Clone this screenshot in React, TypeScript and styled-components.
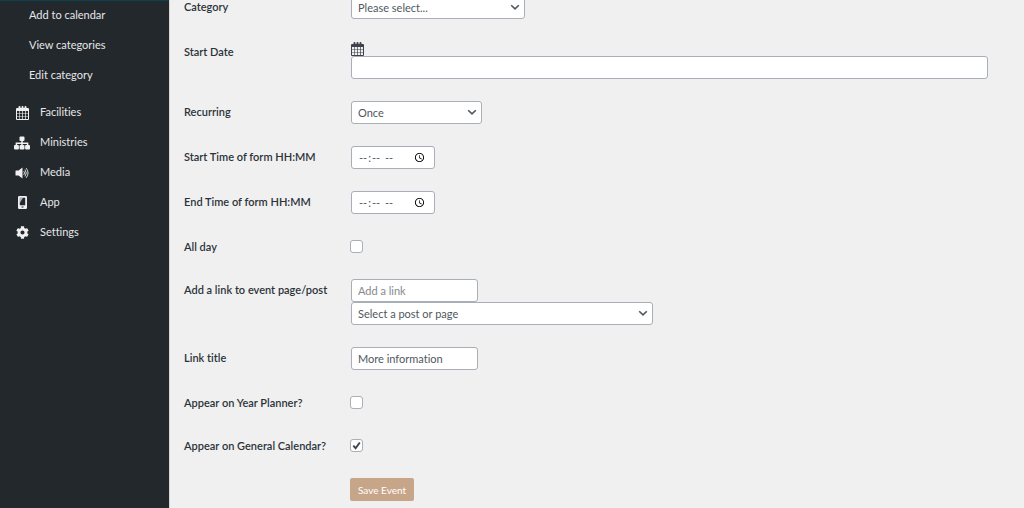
import React from "react";
import styled, { createGlobalStyle } from "styled-components";
import { FaCog } from "react-icons/fa";

const GlobalStyle = createGlobalStyle`
  *, *::before, *::after { box-sizing: border-box; }
  body { margin: 0; background: #f0f0f1; overflow: hidden; }
  body, button, input, select {
    font-family: Lato, "Open Sans", sans-serif;
    font-size: 11px;
    font-variant-ligatures: none;
  }
`;

const Page = styled.div`
  display: flex;
  min-height: 100vh;
  color: #3c434a;
`;

const Sidebar = styled.nav`
  flex: 0 0 169px;
  background: #23282d;
  border-top: 1px solid #0d3f4c;
`;

const Menu = styled.ul<{ $nested?: boolean }>`
  list-style: none;
  margin: ${(p) => (p.$nested ? "-2px 0 0" : "0")};
  padding: ${(p) => (p.$nested ? "0 0 7px 29px" : "0 0 0 14px")};
`;

const MenuLink = styled.a`
  display: flex;
  align-items: center;
  gap: 10px;
  height: 30px;
  color: #e6e7e8;
  text-decoration: none;
`;

const MenuIcon = styled.span`
  display: flex;
  justify-content: center;
  width: 16px;
  padding-top: 3px;
  color: #f0f0f1;
`;

const Main = styled.main`
  flex: 1;
  min-width: 0;
  padding: 0 36px 0 14px;
  border-left: 1px solid #d5d7da;
`;

const Form = styled.form`
  margin-top: -15px;
`;

const Row = styled.div<{ $check?: boolean }>`
  display: grid;
  grid-template-columns: 167px minmax(0, 1fr);
  padding: ${(p) => (p.$check ? "15px 0" : "11px 0")};
`;

const Label = styled.label<{ $check?: boolean }>`
  font-weight: 600;
  color: #2c3338;
  height: ${(p) => (p.$check ? 13 : 23)}px;
  line-height: ${(p) => (p.$check ? 13 : 22)}px;
`;

const Controls = styled.div`
  display: flex;
  flex-direction: column;
  align-items: flex-start;
`;

const IconButton = styled.button`
  display: flex;
  align-items: center;
  height: 15px;
  padding: 0;
  border: 0;
  background: none;
  color: #3c434a;
`;

const TextInput = styled.input<{ $width: string }>`
  width: ${(p) => p.$width};
  height: 23px;
  padding: 0 5px 0 6px;
  border: 1px solid #a9afb6;
  border-radius: 3px;
  background: #fff;
  color: #50575e;
  &::placeholder { color: #85898e; }
`;

const SelectWrap = styled.div<{ $width: number }>`
  display: grid;
  width: ${(p) => p.$width}px;
  max-width: 100%;
  align-items: center;
  & > * { grid-area: 1 / 1; }
  & > svg { justify-self: end; margin-right: 5px; pointer-events: none; }
`;

const SelectBox = styled.select`
  appearance: none;
  width: 100%;
  height: 23px;
  padding: 0 20px 0 6px;
  border: 1px solid #a9afb6;
  border-radius: 3px;
  background: #fff;
  color: #50575e;
`;

const CheckWrap = styled.span`
  display: grid;
  width: 13px;
  height: 13px;
  margin-left: -1px;
  & > * { grid-area: 1 / 1; }
  & > svg { display: none; pointer-events: none; }
  & > input:checked + svg { display: block; }
`;

const CheckInput = styled.input`
  appearance: none;
  width: 13px;
  height: 13px;
  margin: 0;
  border: 1px solid #a9afb6;
  border-radius: 3px;
  background: #fff;
`;

const SaveButton = styled.button`
  height: 23px;
  margin: 11px 0 8px 166px;
  padding: 0 8px;
  border: 0;
  border-radius: 2px;
  background: #c7a589;
  color: #fff;
  font-size: 10px;
`;

const CalendarIcon = () => (
  <svg width="13" height="14" viewBox="0 0 13 14" aria-hidden="true">
    <path
      fill="currentColor"
      fillRule="evenodd"
      d="M1 2h1.500V1a1 1 0 0 1 2 0v1h1V1a1 1 0 0 1 2 0v1h1V1a1 1 0 0 1 2 0v1H12a1 1 0 0 1 1 1v10a1 1 0 0 1-1 1H1a1 1 0 0 1-1-1V3a1 1 0 0 1 1-1zM1 5v2h2.200V5zM3.800 5v2h2.300V5zM6.800 5v2h2.300V5zM9.800 5v2H12V5zM1 7.600v2.300h2.200V7.600zM3.800 7.600v2.300h2.300V7.600zM6.800 7.600v2.300h2.300V7.600zM9.800 7.600v2.300H12V7.600zM1 10.600V13h2.200v-2.400zM3.800 10.600V13h2.300v-2.400zM6.800 10.600V13h2.300v-2.400zM9.800 10.600V13H12v-2.400z"
    />
  </svg>
);

const SitemapIcon = () => (
  <svg width="16" height="14" viewBox="0 0 16 14" aria-hidden="true">
    <rect x="5.500" y="0.500" width="5" height="4.500" rx="1" fill="currentColor" />
    <rect x="0" y="9" width="4.900" height="4.500" rx="1" fill="currentColor" />
    <rect x="5.500" y="9" width="5" height="4.500" rx="1" fill="currentColor" />
    <rect x="11.100" y="9" width="4.900" height="4.500" rx="1" fill="currentColor" />
    <path d="M8 4v6M2.400 10V7.200h11.200V10" fill="none" stroke="currentColor" strokeWidth="1.500" />
  </svg>
);

const SpeakerIcon = () => (
  <svg width="14" height="12" viewBox="0 0 14 12" aria-hidden="true">
    <path fill="currentColor" d="M1 3.500h2.500L7.500 0.500v11L3.500 8.500H1Q0.500 8.500 .5 8V4Q.5 3.500 1 3.500z" />
    <path fill="none" stroke="currentColor" strokeWidth="0.900" d="M8.800 4.200q1.400 1.800 0 3.600M10 2.600q2.500 3.400 0 6.800M11.200 1.200q3.700 4.800 0 9.600" />
  </svg>
);

const PhoneIcon = () => (
  <svg width="9" height="13" viewBox="0 0 9 13" aria-hidden="true">
    <path
      fill="currentColor"
      fillRule="evenodd"
      d="M1.200 0h6.600Q9 0 9 1.200v10.600Q9 13 7.800 13H1.200Q0 13 0 11.800V1.200Q0 0 1.200 0zM1.800 1.800v7.400h5.400V1.800zM3.500 10.600v1h2v-1z"
    />
    <path fill="currentColor" opacity="0.700" d="M1.800 1.800h3.200L1.800 7z" />
  </svg>
);

const Chevron = () => (
  <svg width="10" height="7" viewBox="0 0 10 7" aria-hidden="true">
    <path d="M1.200 1.200 5 4.900l3.800-3.700" fill="none" stroke="#50575e" strokeWidth="1.600" />
  </svg>
);

const Tick = () => (
  <svg width="13" height="13" viewBox="0 0 13 13" aria-hidden="true">
    <path d="M3.300 6.700 5.600 9.200 9.800 3.500" fill="none" stroke="#3c434a" strokeWidth="1.900" />
  </svg>
);

function Select({ id, width, option, name }: { id: string; width: number; option: string; name?: string }) {
  return (
    <SelectWrap $width={width}>
      <SelectBox id={id} aria-label={name}>
        <option>{option}</option>
      </SelectBox>
      <Chevron />
    </SelectWrap>
  );
}

function Field({ id, label, children }: { id: string; label: string; children: React.ReactNode }) {
  return (
    <Row>
      <Label htmlFor={id}>{label}</Label>
      <Controls>{children}</Controls>
    </Row>
  );
}

function CheckField({ id, label, checked }: { id: string; label: string; checked?: boolean }) {
  return (
    <Row $check>
      <Label $check htmlFor={id}>{label}</Label>
      <CheckWrap>
        <CheckInput id={id} type="checkbox" defaultChecked={checked} />
        <Tick />
      </CheckWrap>
    </Row>
  );
}

const subItems = ["Add to calendar", "View categories", "Edit category"];
const items = [
  { label: "Facilities", icon: <CalendarIcon /> },
  { label: "Ministries", icon: <SitemapIcon /> },
  { label: "Media", icon: <SpeakerIcon /> },
  { label: "App", icon: <PhoneIcon /> },
  { label: "Settings", icon: <FaCog size={13} /> },
];

export default function App() {
  return (
    <Page>
      <GlobalStyle />
      <Sidebar>
        <Menu $nested>
          {subItems.map((label) => (
            <li key={label}>
              <MenuLink href="#">{label}</MenuLink>
            </li>
          ))}
        </Menu>
        <Menu>
          {items.map(({ label, icon }) => (
            <li key={label}>
              <MenuLink href="#">
                <MenuIcon>{icon}</MenuIcon>
                {label}
              </MenuLink>
            </li>
          ))}
        </Menu>
      </Sidebar>
      <Main>
        <Form onSubmit={(e) => e.preventDefault()}>
          <Field id="category" label="Category">
            <Select id="category" width={174} option="Please select..." />
          </Field>
          <Field id="start-date" label="Start Date">
            <IconButton type="button" aria-label="Choose date">
              <CalendarIcon />
            </IconButton>
            <TextInput id="start-date" type="text" $width="100%" />
          </Field>
          <Field id="recurring" label="Recurring">
            <Select id="recurring" width={131} option="Once" />
          </Field>
          <Field id="start-time" label="Start Time of form HH:MM">
            <TextInput id="start-time" type="time" $width="84px" />
          </Field>
          <Field id="end-time" label="End Time of form HH:MM">
            <TextInput id="end-time" type="time" $width="84px" />
          </Field>
          <CheckField id="all-day" label="All day" />
          <Field id="link" label="Add a link to event page/post">
            <TextInput id="link" type="text" placeholder="Add a link" $width="127px" />
            <Select id="link-page" name="Post or page" width={302} option="Select a post or page" />
          </Field>
          <Field id="link-title" label="Link title">
            <TextInput id="link-title" type="text" defaultValue="More information" $width="127px" />
          </Field>
          <CheckField id="year-planner" label="Appear on Year Planner?" />
          <CheckField id="general-calendar" label="Appear on General Calendar?" checked />
          <SaveButton type="submit">Save Event</SaveButton>
        </Form>
      </Main>
    </Page>
  );
}
